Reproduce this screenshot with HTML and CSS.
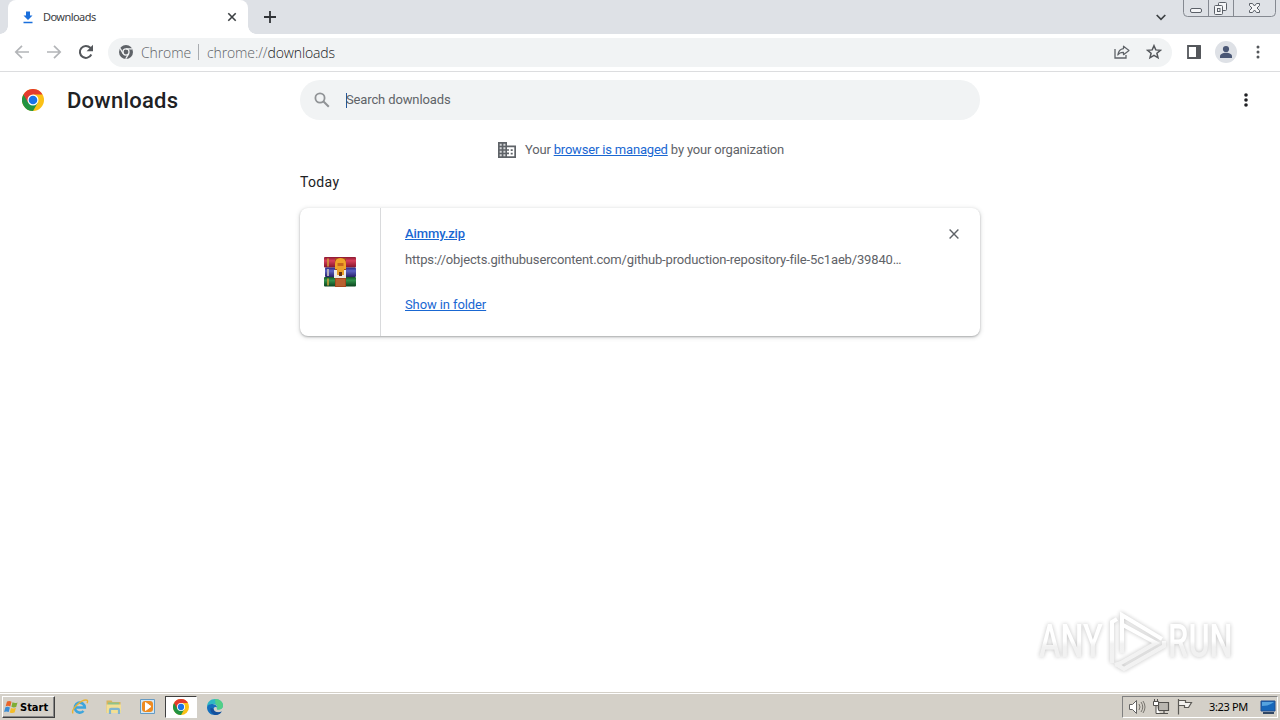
FILE: index.html
```html
<!DOCTYPE html>
<html lang="en">
<head>
<meta charset="utf-8">
<title>Downloads</title>
<link rel="stylesheet" href="styles.css">
</head>
<body>
<svg class="defs" width="0" height="0">
  <symbol id="chrome" viewBox="0 0 24 24">
    <circle cx="12" cy="12" r="12" fill="#fbc116"/>
    <path d="M12 12 1.600 6A12 12 0 0 0 12 24l5.200-9z" fill="#229342"/>
    <path d="M12 12V6h10.400A12 12 0 0 0 1.600 6l5.200 9z" fill="#e33b2e"/>
    <circle cx="12" cy="12" r="6" fill="#fff"/>
    <circle cx="12" cy="12" r="4.700" fill="#1a73e8"/>
  </symbol>
</svg>
<div class="screen">
  <header class="tabstrip">
    <div class="tab">
      <svg class="tab-icon" width="12" height="13" viewBox="0 0 12 13"><path d="M4 0.500h4v4h2.500L6 9 1.500 4.500H4zM1.500 10.800h9v1.400h-9z" fill="#1a6fdc"/></svg>
      <span class="tab-title">Downloads</span>
      <svg class="tab-close" width="10" height="10" viewBox="0 0 10 10"><path d="m1.300 1.300 7.400 7.400M8.700 1.300 1.300 8.700" stroke="#3c4043" stroke-width="1.600"/></svg>
    </div>
    <svg class="new-tab" width="12" height="12" viewBox="0 0 12 12"><path d="M6 0v12M0 6h12" stroke="#303337" stroke-width="1.800"/></svg>
    <svg class="tab-search" width="10" height="7" viewBox="0 0 10 7"><path d="m.7 1 4.300 4.300L9.300 1" fill="none" stroke="#3c4043" stroke-width="1.700"/></svg>
    <svg class="window-buttons" width="94" height="17" viewBox="0 0 94 17">
      <path d="M.5 0v12.500q0 4 4 4h84q4 0 4-4V0M25.500 0v16M50.500 0v16" fill="none" stroke="#858991"/>
      <g fill="#f4f5f7" stroke="#5b6068"><rect x="7.500" y="8.500" width="11" height="4" rx="1.500"/><rect x="35.500" y="2.500" width="8" height="8" rx="1"/><rect x="31.500" y="5.500" width="8" height="9" rx="1"/><rect x="34.500" y="8.500" width="2.500" height="3"/>
      <path d="M66.500 3.500h3l2 2.500 2-2.500h3v2l-2.500 2.500 2.500 2.500v2h-3l-2-2.500-2 2.500h-3v-2L69 8l-2.500-2.500z"/></g>
    </svg>
  </header>
  <div class="toolbar">
    <svg class="nav back" width="16" height="14" viewBox="0 0 16 14"><path d="M15 7H2M8 .8 1.800 7 8 13.200" fill="none" stroke="#b3b5b8" stroke-width="1.700"/></svg>
    <svg class="nav fwd" width="16" height="14" viewBox="0 0 16 14"><path d="M1 7h13M8 .8 14.200 7 8 13.200" fill="none" stroke="#b3b5b8" stroke-width="1.700"/></svg>
    <svg class="nav reload" width="16" height="16" viewBox="0 0 16 16"><path d="M13.300 10.500A6 6 0 1 1 12.300 3.800L14 5.500" fill="none" stroke="#54575b" stroke-width="2"/><path d="M15 .8v6.400H8.600z" fill="#54575b"/></svg>
    <div class="omnibox">
      <svg class="product" width="14" height="14" viewBox="0 0 24 24"><circle cx="12" cy="12" r="12" fill="#5f6368"/><circle cx="12" cy="12" r="5.200" fill="#5f6368" stroke="#f1f3f4" stroke-width="2.200"/><path d="M12 6.500h11M7.200 14.700 1.800 5.500M16.800 14.700l-5.300 9" stroke="#f1f3f4" stroke-width="2.200"/></svg>
      <span class="chip">Chrome</span>
      <span class="divider"></span>
      <span class="url"><span class="scheme">chrome://</span><span class="host">downloads</span></span>
      <svg class="share" width="16" height="16" viewBox="0 0 16 16"><path d="M1 5v9h11v-3" fill="none" stroke="#5f6368" stroke-width="1.300"/><path d="M9.500 2.200 15 6.500l-5.500 4.200V8.400C7 8.300 5 9.200 3.800 11 4.300 7.500 6.200 5 9.500 4.600z" fill="none" stroke="#5f6368" stroke-width="1.200" stroke-linejoin="round"/></svg>
      <svg class="star" width="16" height="16" viewBox="0 0 16 16"><path d="m8 1.700 1.800 4.200 4.600.4-3.500 3 1.100 4.500L8 11.400l-4 2.400 1.100-4.500-3.500-3 4.600-.4z" fill="none" stroke="#54575b" stroke-width="1.500"/></svg>
    </div>
    <svg class="panel" width="14" height="14" viewBox="0 0 14 14"><path d="M1 1h12v12H1z" fill="#fff" stroke="#54575b" stroke-width="1.800"/><path d="M9 1h5v12H9z" fill="#54575b"/></svg>
    <svg class="avatar" width="22" height="22" viewBox="0 0 22 22"><circle cx="11" cy="11" r="11" fill="#dee1e6"/><circle cx="11" cy="8" r="3.100" fill="#4a5775"/><path d="M5 17v-1.700c0-2 3-3.500 6-3.500s6 1.500 6 3.500V17z" fill="#4a5775"/></svg>
    <svg class="menu" width="4" height="14" viewBox="0 0 4 14"><g fill="#54575b"><circle cx="2" cy="2" r="1.500"/><circle cx="2" cy="7" r="1.500"/><circle cx="2" cy="12" r="1.500"/></g></svg>
  </div>
  <main class="page">
    <div class="page-header">
      <svg class="logo" width="22" height="22"><use href="#chrome"/></svg>
      <h1>Downloads</h1>
      <div class="search">
        <svg width="16" height="16" viewBox="0 0 16 16"><circle cx="6" cy="6" r="4.600" fill="none" stroke="#909396" stroke-width="1.800"/><path d="m9.300 9.300 5.500 5.500" stroke="#909396" stroke-width="2"/></svg>
        <span class="caret"></span><span class="placeholder">Search downloads</span>
      </div>
      <svg class="more" width="4" height="14" viewBox="0 0 4 14"><g fill="#202124"><circle cx="2" cy="2" r="1.800"/><circle cx="2" cy="7" r="1.800"/><circle cx="2" cy="12" r="1.800"/></g></svg>
    </div>
    <div class="managed">
      <svg width="18" height="16" viewBox="0 0 18 16"><path d="M0 0h9v3.500h9V16H0z" fill="#5f6368"/><path d="M1.700 1.700h2v2h-2zm3.700 0h2v2h-2zM1.700 5.200h2v2h-2zm3.700 0h2v2h-2zM1.700 8.700h2v2h-2zm3.700 0h2v2h-2zM1.700 12.200h2v2h-2zm3.700 0h2v2h-2z" fill="#d5d6d8"/><path d="M9 5.200h7.300v9H9v-2h2v-1.600H9V8.800h2V7.200H9z" fill="#fff"/><path d="M12.700 7.200h2V9h-2zm0 3.500h2v1.800h-2z" fill="#5f6368"/></svg>
      <span class="managed-text">Your <a>browser is managed</a> by your organization</span>
    </div>
    <h2>Today</h2>
    <article class="card">
      <div class="file-icon">
        <svg width="32" height="31" viewBox="0 0 32 31">
          <defs>
            <linearGradient id="r" x2="0" y2="1"><stop stop-color="#8c1830"/><stop offset=".35" stop-color="#d8405a"/><stop offset="1" stop-color="#84142a"/></linearGradient>
            <linearGradient id="b" x2="0" y2="1"><stop stop-color="#29277f"/><stop offset=".35" stop-color="#5c62c5"/><stop offset="1" stop-color="#272068"/></linearGradient>
            <linearGradient id="g" x2="0" y2="1"><stop stop-color="#125325"/><stop offset=".35" stop-color="#31924b"/><stop offset="1" stop-color="#0b431e"/></linearGradient>
          </defs>
          <rect y="0" width="32" height="10.500" rx="1" fill="url(#r)"/><rect x="1" y="10.500" width="31" height="9.500" rx="1" fill="url(#b)"/><rect y="20" width="32" height="9.500" rx="1" fill="url(#g)"/>
          <path d="M4 1.500v8M4 21.500v7" stroke="#d5a33a" stroke-width="1.500"/><path d="M4 12v7" stroke="#b3aebb" stroke-width="2"/>
          <path d="M11 1h11v29H11z" fill="#a54a20"/><path d="M11 7q0-6 5.500-6T22 7v5H11z" fill="#f0a528"/><path d="M13.500 6h6v3h-6z" fill="#c8661c"/><path d="M10 13h12v8H10z" fill="#eee9e4"/><path d="M13 9h7v9h-7z" fill="#eba02a"/><path d="M15 15h3v4h-3z" fill="#653017"/><path d="M12 22h9v7h-9z" fill="#b9602f"/>
        </svg>
      </div>
      <div class="details">
        <a class="name">Aimmy.zip</a>
        <div class="source">https://objects.githubusercontent.com/github-production-repository-file-5c1aeb/39840…</div>
        <a class="show">Show in folder</a>
      </div>
      <svg class="remove" width="10" height="10" viewBox="0 0 10 10"><path d="m.6.6 8.800 8.800m0-8.800L.6 9.400" stroke="#5f6368" stroke-width="1.400"/></svg>
    </article>
    <div class="watermark">
      <svg width="240" height="76" viewBox="0 0 240 76">
        <defs><linearGradient id="fade" gradientUnits="userSpaceOnUse" x1="0" y1="18" x2="0" y2="60"><stop stop-color="#fff"/><stop offset=".4" stop-color="#fff"/><stop offset=".5" stop-color="#eee"/><stop offset="1" stop-color="#f0f0f0"/></linearGradient>
        <linearGradient id="textfade" x2="0" y2="1"><stop offset=".5" stop-color="#fff"/><stop offset=".6" stop-color="#eee"/></linearGradient></defs>
        <g fill="url(#textfade)" font-family="Roboto, sans-serif" font-size="47" font-weight="500"><text transform="translate(9 52) scale(.69 1)">ANY</text><text transform="translate(138 52) scale(.69 1)">RUN</text></g>
        <g fill="none" stroke="url(#fade)" stroke-width="4"><path d="M82 58V17l5-3M92 48V10l40 24"/><path d="M93 20l33 18-35 20-6 2M134 36v5L94 64l-8-5"/></g>
      </svg>
    </div>
  </main>
  <footer class="taskbar">
    <div class="start"><svg width="15" height="14" viewBox="0 0 15 14"><path d="M3 1.500q2.500-1 4.500.3L6.300 6.400Q4 5.200 1.700 6.200z" fill="#e96429"/><path d="M8.500 2.200q2.500 1.300 5 .2l-1.300 4.500q-2.400 1-4.800-.1z" fill="#7dad35"/><path d="M1.400 7.200q2.200-1 4.500.2l-1.200 4.700Q2.400 11 .1 12z" fill="#3b8dd5"/><path d="M7 7.900q2.500 1.200 4.900.2l-1.300 4.500q-2.400 1-4.800-.1z" fill="#f4bd28"/></svg><span>Start</span></div>
    <svg class="app ie" width="18" height="18" viewBox="0 0 18 18"><path d="M4.500 9.500h9.300A5 5 0 1 0 12.500 13" fill="none" stroke="#3da5dc" stroke-width="2.600"/><path d="M2 15.500C-.5 11 11 1 16 2.200q1.200.6 0 3" fill="none" stroke="#e8b333" stroke-width="1.400"/></svg>
    <svg class="app" width="18" height="18" viewBox="0 0 18 18"><path d="M1.500 2.500h5l1 1.500h8V15h-14z" fill="#d8b45c"/><path d="M3 4.500h11v5H3z" fill="#8fc28a"/><path d="M1.500 6.500h14.500v8.500H1.500z" fill="#f3df94"/><path d="M5 16v-4q0-1.200 1-1.200h7q1 0 1 1.200v4" fill="none" stroke="#7fb5d0" stroke-width="2.200"/></svg>
    <svg class="app" width="18" height="18" viewBox="0 0 18 18"><path d="M1.500 1.500h14v14h-14z" fill="#d4e8f5" stroke="#659bc4"/><rect x="3" y="3" width="11" height="11" rx="3" fill="#ee8b20"/><path d="m6.500 4.500 5.500 4-5.500 4z" fill="#fff" stroke="#fff" stroke-linejoin="round"/></svg>
    <div class="active-app"><svg width="16" height="16"><use href="#chrome"/></svg></div>
    <svg class="app edge" width="18" height="18" viewBox="0 0 18 18"><path d="M1 9C1 4 4.500 1 9 1c5 0 8 3.200 8 6.500 0 2.500-1.800 4-4.500 4-1.300 0-2-.5-1.500-1.300C12 8.500 10.500 6 7 6 4 6 1.500 7.500 1 9z" fill="#2fb7c4"/><path d="M9 1c5 0 8 3.200 8 6.500 0 2.500-1.800 4-4.500 4-1.300 0-2-.5-1.500-1.300 1-1.700 0-3.500-1.500-4.200z" fill="#52cf86"/><path d="M1 9c.5-2 3-3.300 5.500-3 3 .3 4.500 2 4.500 3.500-1-1-3-.8-3.500 1C7 13 9.500 15 13 14.500q1.300-.2 2.700-1C14.500 15.800 12 17 9 17c-5 0-8-3.500-8-8z" fill="#146fbd"/><path d="M4.500 10C4 14 6.500 16.500 9.500 17c3 0 5-1.300 6.200-3.500-4 2-8.200 0-8.200-3z" fill="#15509c"/></svg>
    <div class="tray">
      <svg width="18" height="18" viewBox="0 0 18 18"><path d="M1.500 6.500h3l4-4v13l-4-4h-3z" fill="#fff" stroke="#626262"/><path d="M11 6q2 3 0 6M13 4q3.500 5 0 10M15 3q4 6 0 12" fill="none" stroke="#77746e"/></svg>
      <svg width="18" height="18" viewBox="0 0 18 18"><path d="M6.500 4.500h10v8h-10zM8 15.500h8M12 13v2" fill="#b9b6b0" stroke="#514f4c" stroke-width="1.200"/><path d="M1.500 3.500h5v4h-5zM2.500 1v2M5.500 1v2M4 8v7.500h4" fill="#fff" stroke="#514f4c"/></svg>
      <svg width="18" height="18" viewBox="0 0 18 18"><path d="M2.500 1v15.500M2.500 2.500h7v2h6l-3 5h-4v-2h-6" fill="#f3f2ef" stroke="#5c5a56" stroke-width="1.200"/></svg>
      <time>3:23 PM</time>
      <svg class="desktop" width="16" height="16" viewBox="0 0 16 16"><path d="M1 2h14v10H1z" fill="#1767ba" stroke="#244f8e"/><path d="M2 3h12Q9 7 2 7z" fill="#56a3df"/><path d="M3 13h11v2H3z" fill="#314764"/></svg>
    </div>
  </footer>
</div>
</body>
</html>
```
FILE: styles.css
```css
* { box-sizing: border-box; }
body { margin: 0; background: #fff; font-family: Roboto, sans-serif; }
svg { display: block; flex: none; }
.defs { position: absolute; }
.screen { width: 1280px; height: 720px; overflow: hidden; display: flex; flex-direction: column; }
.tabstrip { height: 34px; background: #dee1e6; display: flex; flex: none; }
.tab { width: 240px; height: 34px; margin-left: 8px; background: #fff; border-radius: 8px 8px 0 0; display: flex; align-items: center; padding: 0 11px 0 14px; position: relative; }
.tab::before, .tab::after { content: ""; position: absolute; bottom: 0; width: 8px; height: 8px; }
.tab::before { left: -8px; background: radial-gradient(circle at 0 0, transparent 7.500px, #fff 8px); }
.tab::after { right: -8px; background: radial-gradient(circle at 100% 0, transparent 7.500px, #fff 8px); }
.tab-title { font: 11px/14px "Noto Sans", sans-serif; letter-spacing: -.55px; color: #3c4043; margin-left: 9px; flex: 1; white-space: nowrap; }
.new-tab { margin: 11px 0 0 16px; }
.tab-search { margin: 14px 17px 0 auto; }
.window-buttons { margin-right: 3px; }
.toolbar { height: 38px; border-bottom: 1px solid #dcdddf; display: flex; align-items: center; flex: none; padding: 0 0 1px 14px; }
.fwd { margin-left: 16px; }
.reload { margin-left: 16px; }
.omnibox { width: 1064px; height: 29px; margin-left: 14px; border-radius: 15px; background: #f1f3f4; display: flex; align-items: center; padding: 0 10px 0 11px; font: 300 14px/20px "Open Sans", sans-serif; color: #5f6368; }
.chip { margin-left: 8px; width: 50px; padding-top: 2px; white-space: nowrap; letter-spacing: -.1px; }
.divider { width: 1px; height: 16px; background: #a9acb0; margin: 0 8px 0 7px; }
.url { flex: 1; padding-top: 2px; letter-spacing: -.12px; }
.host { color: #202124; }
.share { margin-right: 16px; }
.panel { margin-left: 15px; }
.avatar { margin-left: 14px; }
.menu { margin-left: 19px; }
.page { flex: 1; position: relative; display: flex; flex-direction: column; }
.page-header { height: 56px; display: flex; align-items: center; padding-left: 22px; }
h1 { margin: 0 0 0 23px; padding-top: 2px; width: 233px; font-size: 22px; line-height: 28px; font-weight: 500; letter-spacing: .25px; color: #202124; }
.search { width: 680px; height: 40px; border-radius: 20px; background: #f1f3f4; display: flex; align-items: center; padding-left: 14px; }
.caret { width: 1px; height: 15px; background: #24579b; margin-left: 16px; }
.placeholder { font-size: 13px; color: #5f6368; letter-spacing: -.13px; margin-left: -1px; padding-bottom: 2px; }
.more { margin-left: 264px; }
.managed { height: 44px; display: flex; align-items: center; justify-content: center; gap: 9px; padding-left: 2px; font-size: 13px; color: #5f6368; }
.managed-text { letter-spacing: -.18px; padding-bottom: 2px; }
a { color: #1967d2; text-decoration: underline; }
h2 { font-size: 14px; line-height: 20px; font-weight: 400; letter-spacing: .35px; color: #202124; margin: 0 0 0 300px; }
.card { width: 680px; height: 128px; margin: 16px 0 0 300px; border-radius: 8px; background: #fff; box-shadow: 0 1px 2px rgba(60,64,67,.35), 0 1px 4px 1px rgba(60,64,67,.15); display: flex; }
.file-icon { width: 81px; border-right: 1px solid #d9dadc; display: grid; place-items: center; }
.details { display: flex; flex-direction: column; align-items: flex-start; padding: 18px 0 0 24px; width: 567px; font-size: 13px; line-height: 16px; }
.name { font-weight: 500; letter-spacing: -.1px; }
.source { color: #5f6368; margin-top: 10px; white-space: nowrap; letter-spacing: -.16px; }
.show { margin-top: 29px; letter-spacing: -.1px; }
.remove { margin: 21px 0 0 1px; }
.watermark { position: absolute; left: 1030px; top: 533px; }
.watermark svg { filter: drop-shadow(0 0 2px rgba(0,0,0,.3)); opacity: .8; }
.taskbar { height: 28px; background: #d4d0c8; border-top: 1px solid #d4d0c8; box-shadow: inset 0 1px #fff; display: flex; align-items: center; padding: 1px 2px 0; flex: none; }
.start { width: 53px; height: 22px; border: 1px solid; border-color: #fff #404040 #404040 #fff; box-shadow: inset -1px -1px #888; display: flex; align-items: center; padding-left: 1px; gap: 1px; font: bold 11px "DejaVu Sans Condensed", "DejaVu Sans", sans-serif; color: #000; }
.app { margin-left: 16px; }
.active-app { width: 32px; height: 22px; margin-left: 8px; background: #fff; border: 1px solid; border-color: #404040 #fff #fff #404040; display: grid; place-items: center; }
.edge { margin-left: 9px; }
.tray { width: 156px; height: 22px; margin-left: auto; border: 1px solid; border-color: #808080 #fff #fff #808080; display: flex; align-items: center; padding-left: 5px; gap: 6px; }
time { width: 42px; margin-left: 9px; padding-bottom: 1px; white-space: nowrap; font: 11px "Noto Sans", sans-serif; letter-spacing: -.35px; color: #000; }
.desktop { margin-left: 3px; }
```
